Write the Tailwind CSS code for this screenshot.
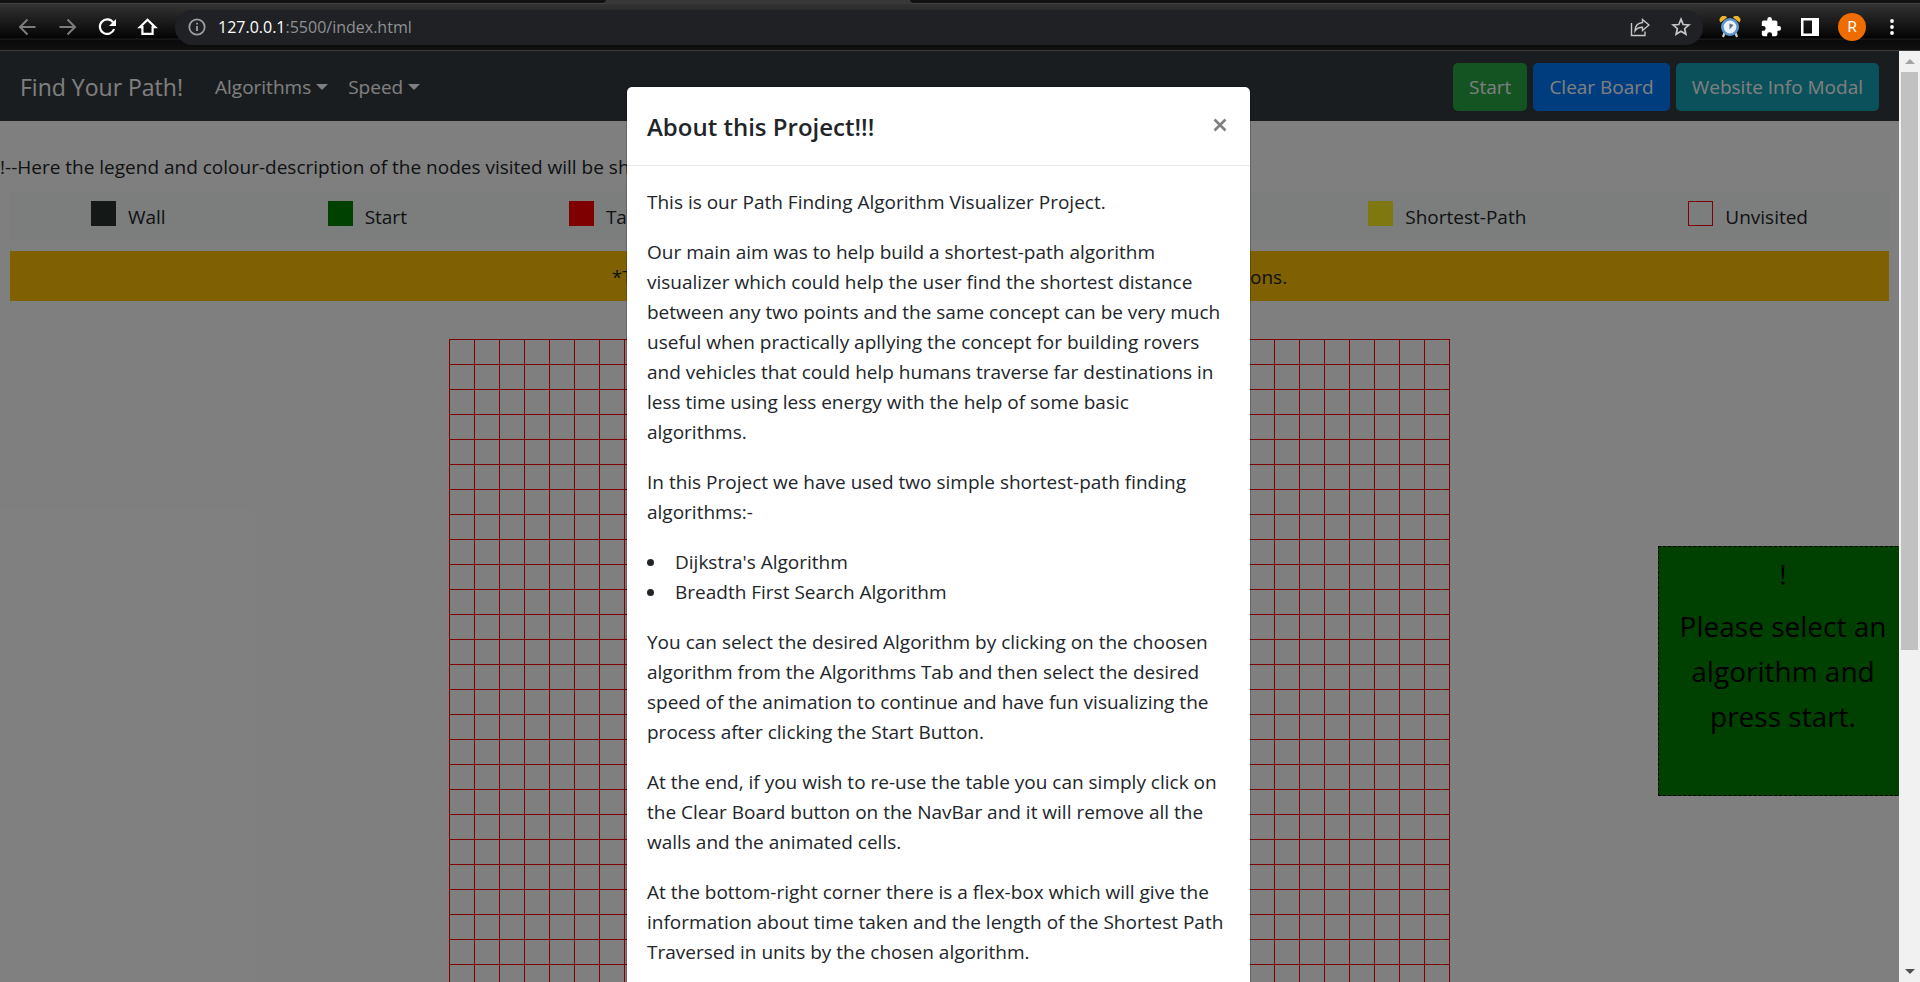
<!DOCTYPE html>
<html lang="en">
<head>
<meta charset="utf-8">
<title>Find Your Path!</title>
<script src="https://cdn.jsdelivr.net/npm/@tailwindcss/browser@4"></script>
</head>
<body class="flex h-screen flex-col overflow-hidden bg-black font-['Open_Sans',sans-serif] text-[19px] leading-[30px] text-[#212529]">

<!-- Browser toolbar -->
<header class="flex h-[51px] shrink-0 flex-col border-b border-[#3c3c3c] bg-[#0d0d0d]">
  <div class="flex h-1 shrink-0 bg-[#383838]">
    <div class="w-[606px] rounded-br-md border-b border-[#444444] bg-[#111111]"></div>
    <div class="w-[304px]"></div>
    <div class="flex-1 rounded-bl-md border-b border-[#444444] bg-[#111111]"></div>
  </div>
  <div class="flex h-[46px] items-center bg-[linear-gradient(to_bottom,#333333_0,#050505_33px,#000000_34px,#222222_35px,#0a0a0a_36px,#101010_46px)] pr-[25px] pl-[15px]">
    <nav class="flex items-center gap-4">
      <button aria-label="Back" class="text-[#7c7c7c]"><svg class="size-6" viewBox="0 0 24 24" fill="none" stroke="currentColor" stroke-width="2"><path d="M20.500 12H5.500M12.500 4.500 5 12l7.500 7.500"/></svg></button>
      <button aria-label="Forward" class="text-[#7c7c7c]"><svg class="size-6" viewBox="0 0 24 24" fill="none" stroke="currentColor" stroke-width="2"><path d="M4.500 12h15M12.500 4.500 20 12l-7.500 7.500"/></svg></button>
      <button aria-label="Reload" class="text-white"><svg class="size-6" viewBox="0 0 24 24" fill="none" stroke="currentColor" stroke-width="2.200"><path d="M18.200 7.500A7.300 7.300 0 1 0 19.100 14"/><path d="M21 4v7h-7z" fill="currentColor" stroke="none"/></svg></button>
      <button aria-label="Home" class="text-white"><svg class="size-6" viewBox="0 0 24 24" fill="none" stroke="currentColor" stroke-width="2.200"><path d="M4.800 12.200 12.500 4.700l7.700 7.500h-2.600v6.700H7.400v-6.700z"/></svg></button>
    </nav>
    <div class="ml-[16px] flex h-[35px] flex-1 items-center rounded-full bg-[#202124] pr-3 pl-[13px]">
      <svg class="size-[18px]" viewBox="0 0 18 18" fill="none" stroke="#9aa0a6" stroke-width="1.800"><circle cx="9" cy="9" r="7.700"/><path d="M9 8v5M9 4.800v1.800"/></svg>
      <a href="#" class="ml-3 text-[16px] leading-6 text-[#8f9194]"><span class="text-white">127.0.0.1</span>:5500/index.html</a>
      <div class="ml-auto flex items-center gap-[21px] text-[#c7c7c7]">
        <button aria-label="Share"><svg class="size-5" viewBox="0 0 20 20" fill="none" stroke="currentColor" stroke-width="1.400"><path d="M1.500 6v12.500h13.500v-4"/><path d="M12.500 2.500 19 8l-6.500 5.500v-3.200c-4 0-6 1.200-7.500 3.700 0-5 3-8 7.500-8.500z"/></svg></button>
        <button aria-label="Bookmark"><svg class="size-5" viewBox="0 0 20 20" fill="none" stroke="currentColor" stroke-width="1.700"><path d="m10 2.200 2.200 5.300 5.700.5-4.300 3.700 1.300 5.600-4.900-3-4.900 3 1.300-5.600L2.100 8l5.700-.5z"/></svg></button>
      </div>
    </div>
    <div class="ml-4 flex items-center gap-[19px]">
      <button aria-label="Clock extension"><svg class="size-[22px]" viewBox="0 0 22 22"><path d="m5.500 17-1.500 4M16.500 17l1.500 4" stroke="#ccc" stroke-width="2.200"/><path d="M1.500 6.500a4 4 0 0 1 6.500-5zM20.500 6.500a4 4 0 0 0-6.500-5z" fill="#f0b429"/><circle cx="11" cy="11" r="7.700" fill="#e8f1f8" stroke="#5b93cf" stroke-width="2.600"/><path d="M10.500 7.500v6l4-4.500z" fill="#5d6f7c"/></svg></button>
      <button aria-label="Extensions" class="text-white"><svg class="size-[22px]" viewBox="0 0 24 24" fill="currentColor"><path d="M20.500 11H19V7c0-1.100-.9-2-2-2h-4V3.500a2.500 2.500 0 0 0-5 0V5H4c-1.100 0-2 .9-2 2v3.800h1.500a2.700 2.700 0 0 1 0 5.400H2V20c0 1.100.9 2 2 2h3.800v-1.500a2.700 2.700 0 0 1 5.400 0V22H17c1.100 0 2-.9 2-2v-4h1.500a2.500 2.500 0 0 0 0-5z"/></svg></button>
      <button aria-label="Side panel"><svg class="size-[18px]" viewBox="0 0 18 18"><path fill="#fff" fill-rule="evenodd" d="M0 0h18v18H0zM2.500 2.500v13h8.500v-13z"/></svg></button>
      <button aria-label="Profile" class="size-7 rounded-full bg-[#ef6c00] font-[Roboto,sans-serif] text-[15px] leading-7 text-white">R</button>
      <button aria-label="Menu"><svg class="h-[18px] w-[10px]" viewBox="0 0 10 18" fill="#fff"><circle cx="7" cy="3" r="1.900"/><circle cx="7" cy="9" r="1.900"/><circle cx="7" cy="15" r="1.900"/></svg></button>
    </div>
  </div>
</header>

<div class="flex min-h-0 flex-1">
  <div class="relative min-w-0 flex-1 overflow-hidden bg-white">

    <!-- Navbar -->
    <nav class="flex h-[70px] items-center bg-[#343a40] px-5 pt-px text-white">
      <a href="#" class="mr-8 text-[23px]">Find Your Path!</a>
      <button class="flex items-center gap-[5px]">Algorithms<span class="border-x-6 border-t-6 border-x-transparent"></span></button>
      <button class="ml-5 flex items-center gap-[5px]">Speed<span class="border-x-6 border-t-6 border-x-transparent"></span></button>
      <div class="ml-auto flex gap-[6px]">
        <button class="h-12 rounded-[5px] bg-[#28a745] px-4">Start</button>
        <button class="h-12 rounded-[5px] bg-[#007bff] px-4">Clear Board</button>
        <button class="h-12 rounded-[5px] bg-[#17a2b8] px-4">Website Info Modal</button>
      </div>
    </nav>

    <!-- Legend -->
    <main class="pt-[31px]">
      <p>!--Here the legend and colour-description of the nodes visited will be shown--</p>
      <ul class="mx-[10px] mt-[9px] flex h-[50px] items-start justify-around bg-[#f8fcfa] pt-[10px] leading-8">
        <li class="flex items-start gap-3"><span class="size-[25px] bg-[#28302e]"></span>Wall</li>
        <li class="flex items-start gap-3"><span class="size-[25px] bg-[#008000]"></span>Start</li>
        <li class="flex items-start gap-3"><span class="size-[25px] bg-[#ff0000]"></span>Target</li>
        <li class="flex items-start gap-3"><span class="size-[25px] bg-[#00bfff]"></span>Visited</li>
        <li class="flex items-start gap-3"><span class="size-[25px] bg-[#9370db]"></span>Searching</li>
        <li class="flex items-start gap-3"><span class="size-[25px] bg-[#fff020]"></span>Shortest-Path</li>
        <li class="flex items-start gap-3"><span class="size-[25px] border border-[#ff0000]"></span>Unvisited</li>
      </ul>
      <p class="mx-[10px] mt-[10px] bg-[#ffc107] pt-[11px] pb-[9px] text-center">*The visualizer begins only after you select the algorithm and speed options.</p>

      <!-- Board -->
      <div class="mx-auto mt-[38px] h-[1001px] w-[1001px] bg-[linear-gradient(to_right,#ff0000_1px,transparent_1px),linear-gradient(to_bottom,#ff0000_1px,transparent_1px)] bg-size-[25px_25px]"></div>
    </main>

    <!-- Result box -->
    <aside class="absolute top-[495px] -right-[9px] h-[250px] w-[250px] border border-dashed border-black bg-[#008000] px-2 pt-[5px] text-center text-[28px] leading-[45px] text-black">
      <p>!</p>
      <p class="mt-[7px]">Please select an algorithm and press start.</p>
    </aside>

    <div class="absolute inset-0 bg-black/50"></div>

    <!-- Modal -->
    <div class="absolute inset-0 flex items-start justify-center pt-[35px] pr-[22px]">
      <section role="dialog" aria-labelledby="about" class="w-[625px] rounded-md border border-black/20 bg-white bg-clip-padding">
        <div class="flex h-[79px] items-start justify-between border-b border-[#e9ecef] px-5 pt-[21px]">
          <h5 id="about" class="text-[24px] leading-[38px] font-semibold">About this Project!!!</h5>
          <button aria-label="Close" class="pt-[10px] pr-[3px] text-[#7f7f7f]"><svg class="size-[14px]" viewBox="0 0 14 14" fill="none" stroke="currentColor" stroke-width="2.600"><path d="m1.500 1.500 11 11M12.500 1.500l-11 11"/></svg></button>
        </div>
        <div class="flex flex-col gap-5 px-5 pt-[21px] pb-5">
          <p>This is our Path Finding Algorithm Visualizer Project.</p>
          <p>Our main aim was to help build a shortest-path algorithm visualizer which could help the user find the shortest distance between any two points and the same concept can be very much useful when practically apllying the concept for building rovers and vehicles that could help humans traverse far destinations in less time using less energy with the help of some basic algorithms.</p>
          <p>In this Project we have used two simple shortest-path finding algorithms:-</p>
          <ul>
            <li class="flex items-center gap-[21px]"><span class="size-[7px] rounded-full bg-[#212529]"></span>Dijkstra's Algorithm</li>
            <li class="flex items-center gap-[21px]"><span class="size-[7px] rounded-full bg-[#212529]"></span>Breadth First Search Algorithm</li>
          </ul>
          <p>You can select the desired Algorithm by clicking on the choosen algorithm from the Algorithms Tab and then select the desired speed of the animation to continue and have fun visualizing the process after clicking the Start Button.</p>
          <p>At the end, if you wish to re-use the table you can simply click on the Clear Board button on the NavBar and it will remove all the walls and the animated cells.</p>
          <p>At the bottom-right corner there is a flex-box which will give the information about time taken and the length of the Shortest Path Traversed in units by the chosen algorithm.</p>
        </div>
      </section>
    </div>
  </div>

  <!-- Page scrollbar -->
  <div class="flex w-[21px] shrink-0 flex-col items-center bg-[#f1f1f1]">
    <div class="flex h-[21px] w-full items-center justify-center"><span class="border-x-5 border-b-5 border-x-transparent border-b-[#a3a3a3]"></span></div>
    <div class="flex w-full flex-1 justify-center"><div class="h-[65%] w-[17px] bg-[#c1c1c1]"></div></div>
    <div class="flex h-[21px] w-full items-center justify-center"><span class="border-x-5 border-t-5 border-x-transparent border-t-[#505050]"></span></div>
  </div>
</div>
</body>
</html>
